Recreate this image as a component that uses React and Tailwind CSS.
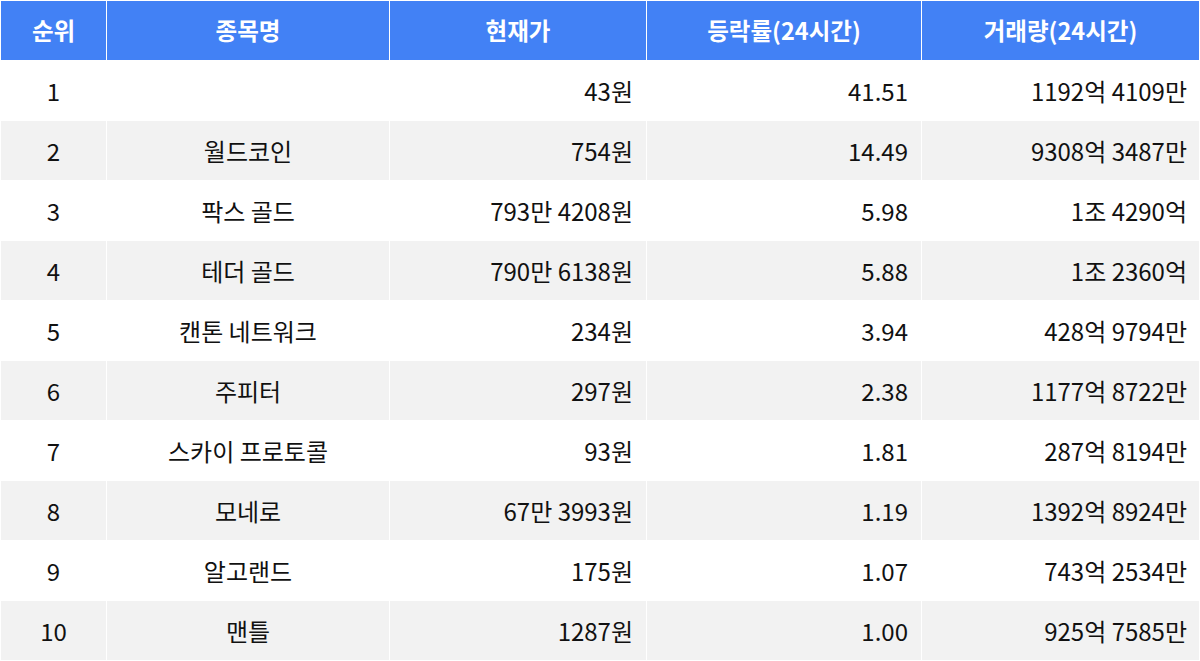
import React from "react";

const rows = [
  ["1", "", "43원", "41.51", "1192억 4109만"],
  ["2", "월드코인", "754원", "14.49", "9308억 3487만"],
  ["3", "팍스 골드", "793만 4208원", "5.98", "1조 4290억"],
  ["4", "테더 골드", "790만 6138원", "5.88", "1조 2360억"],
  ["5", "캔톤 네트워크", "234원", "3.94", "428억 9794만"],
  ["6", "주피터", "297원", "2.38", "1177억 8722만"],
  ["7", "스카이 프로토콜", "93원", "1.81", "287억 8194만"],
  ["8", "모네로", "67만 3993원", "1.19", "1392억 8924만"],
  ["9", "알고랜드", "175원", "1.07", "743억 2534만"],
  ["10", "맨틀", "1287원", "1.00", "925억 7585만"],
];

const headers = ["순위", "종목명", "현재가", "등락률(24시간)", "거래량(24시간)"];

export default function App() {
  return (
    <div
      className="w-[1200px] h-[661px] bg-white overflow-hidden"
      style={{ fontFamily: '"Noto Sans CJK KR", "Noto Sans", sans-serif' }}
    >
      <table className="w-[1200px] table-fixed border-separate border-spacing-[1px] text-[24px] text-[#111]">
        <colgroup>
          <col className="w-[105px]" />
          <col className="w-[282px]" />
          <col className="w-[256px]" />
          <col className="w-[274px]" />
          <col className="w-[277px]" />
        </colgroup>
        <thead>
          <tr className="h-[59px]">
            {headers.map((h) => (
              <th
                key={h}
                className="bg-[#4281f5] text-white font-bold text-[23.5px] text-center p-0 align-middle"
              >
                {h}
              </th>
            ))}
          </tr>
        </thead>
        <tbody>
          {rows.map((r, i) => (
            <tr key={r[0]} className={`h-[59px] ${i % 2 === 1 ? "bg-[#f2f2f2]" : "bg-white"}`}>
              <td className="text-center p-0 align-middle">{r[0]}</td>
              <td className="text-center p-0 align-middle">{r[1]}</td>
              <td className="text-right pr-[13px] p-0 align-middle">{r[2]}</td>
              <td className="text-right pr-[13px] p-0 align-middle">{r[3]}</td>
              <td className="text-right pr-[12px] p-0 align-middle">{r[4]}</td>
            </tr>
          ))}
        </tbody>
      </table>
    </div>
  );
}
